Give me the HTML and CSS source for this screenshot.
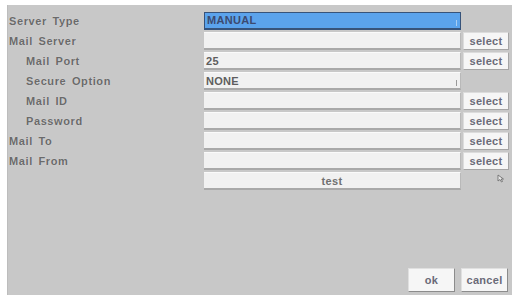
FILE: index.html
```html
<!DOCTYPE html>
<html lang="en">
<head>
  <meta charset="UTF-8">
  <title>Mail Setup</title>
  <link rel="stylesheet" href="styles.css">
</head>
<body>
  <div class="panel">
    <div class="form">
      <div class="label">Server Type</div>
      <div class="field combo active">MANUAL<span class="grip"></span></div>
      <div></div>

      <div class="label">Mail Server</div>
      <div class="field"></div>
      <div class="btn">select</div>

      <div class="label sub">Mail Port</div>
      <div class="field">25</div>
      <div class="btn">select</div>

      <div class="label sub">Secure Option</div>
      <div class="field combo">NONE<span class="grip"></span></div>
      <div></div>

      <div class="label sub">Mail ID</div>
      <div class="field"></div>
      <div class="btn">select</div>

      <div class="label sub">Password</div>
      <div class="field"></div>
      <div class="btn">select</div>

      <div class="label">Mail To</div>
      <div class="field"></div>
      <div class="btn">select</div>

      <div class="label">Mail From</div>
      <div class="field"></div>
      <div class="btn">select</div>

      <div></div>
      <div class="field test">test</div>
      <div class="cursor">
        <svg width="8" height="9" viewBox="0 0 8 9">
          <path d="M1 1 L1 7 L3 5.5 L4.5 8 L5.5 7.5 L4.2 5 L6.5 5 Z" fill="#e8e8e8" stroke="#666" stroke-width="0.8"/>
        </svg>
      </div>
    </div>
    <div class="actions">
      <div class="btn big">ok</div>
      <div class="btn big">cancel</div>
    </div>
  </div>
</body>
</html>
```

FILE: styles.css
```css
/* mail setup dialog */
body {
  margin: 0;
  background: #ffffff;
  font-family: "Liberation Sans", Arial, sans-serif;
  font-weight: bold;
  font-size: 11px;
  color: #6e6e6e;
}
.panel {
  margin: 5px 3px 0 7px;
  height: 290px;
  background: #c8c8c8;
  display: flex;
  flex-direction: column;
  border-left: 1px solid #bdbdbd;
}
.form {
  display: grid;
  grid-template-columns: 194px 257px 46px;
  grid-auto-rows: 18px;
  column-gap: 2px;
  row-gap: 2px;
  padding-top: 7px;
}
.label {
  padding-left: 1px;
  line-height: 18px;
  letter-spacing: 0.6px;
  word-spacing: 2px;
  color: #6a6a6a;
  text-shadow: 0 0 1px #e4e4e4;
}
.label.sub {
  padding-left: 18px;
}
.field {
  background: #f1f1f1;
  border-top: 1px solid #fafafa;
  border-bottom: 2px solid #a9a9a9;
  border-right: 1px solid #b9b9b9;
  box-sizing: border-box;
  line-height: 16px;
  padding-left: 2px;
  color: #5e5e5e;
  position: relative;
  letter-spacing: 0.3px;
}
.combo .grip {
  position: absolute;
  right: 3px;
  bottom: 2px;
  width: 4px;
  height: 6px;
  border-right: 1px solid #9a9a9a;
}
.active {
  background: #5ba3ec;
  border: 1px solid #37537a;
  border-bottom: 2px solid #37537a;
  color: #3c4a70;
  line-height: 15px;
}
.active .grip {
  border-right-color: #a8cdf2;
}
.btn {
  background: #f6f6f6;
  border: 1px solid #dcdcdc;
  border-bottom-color: #a5a5a5;
  border-right-color: #a5a5a5;
  box-sizing: border-box;
  text-align: center;
  line-height: 16px;
  color: #6a6a78;
  letter-spacing: 0.3px;
}
.test {
  text-align: center;
  padding-left: 0;
  color: #707070;
}
.cursor {
  padding: 1px 0 0 34px;
}
.actions {
  margin-top: auto;
  margin-bottom: 3px;
  display: flex;
  justify-content: flex-end;
  gap: 6px;
  padding-right: 4px;
}
.btn.big {
  width: 47px;
  height: 24px;
  line-height: 22px;
  border: 1px solid #8c8c8c;
  border-top-color: #e0e0e0;
  border-left-color: #e0e0e0;
}
```
